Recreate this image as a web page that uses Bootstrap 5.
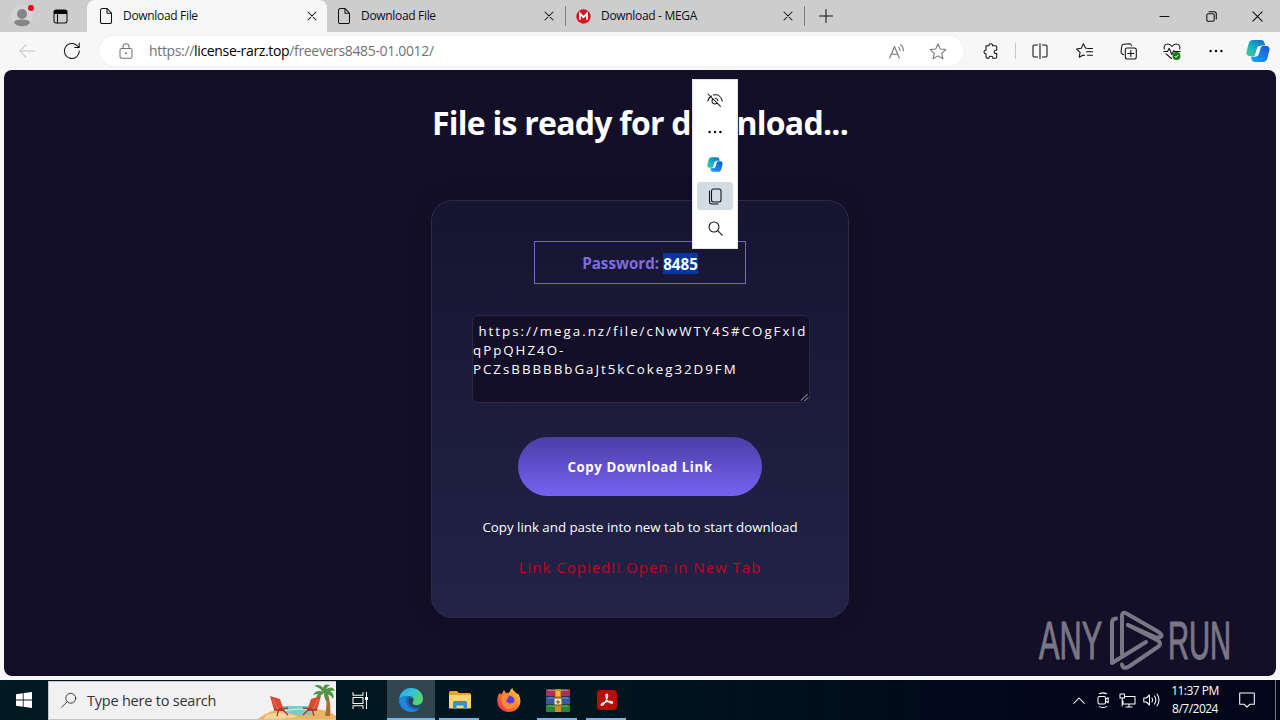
<!DOCTYPE html>
<html lang="en">
<head>
  <meta charset="UTF-8" />
  <meta name="viewport" content="width=device-width, initial-scale=1" />
  <title>Download File</title>
  <link href="https://cdn.jsdelivr.net/npm/bootstrap@5.3.0/dist/css/bootstrap.min.css" rel="stylesheet" />

  <style>
    body {
      width: 1280px;
      height: 720px;
      background-color: #f7f7f7;
      font-family: "Open Sans", "Noto Sans", sans-serif;
      font-size: 12px;
      line-height: 1;
      color: #111;
    }

    svg {
      display: block;
      flex-shrink: 0;
      overflow: visible;
    }

    .ln {
      fill: none;
      stroke: currentColor;
      stroke-width: 1.05;
      stroke-linecap: round;
      stroke-linejoin: round;
    }

    /* tab strip */
    .tabstrip { height: 32px; background: #cdcdcd; }
    .strip-start { width: 87px; border-bottom-right-radius: 8px; padding-left: 10px; gap: 18px; }
    .tab-item { width: 238px; padding: 0 11px 0 10px; }
    .tab-item.current { width: 240px; background: #f7f7f7; border-radius: 8px 8px 0 0; padding-left: 12px; padding-right: 10px; }
    .tab-item .name { margin-left: 10px; letter-spacing: -.32px; }
    .tab-line { width: 1px; height: 20px; background: #808080; }
    .plus { margin-left: 14px; }
    .win-btn { width: 46px; }

    /* address row */
    .toolbar { height: 38px; }
    .reload { width: 55px; padding-left: 19px; }
    .addr { width: 865px; height: 30px; background: #fff; border-radius: 15px; box-shadow: 0 0 2px #e2e2e2; color: #737373; }
    .addr .url { font-size: 14px; letter-spacing: -.34px; margin-left: 16px; }
    .addr .url b { font-weight: 400; color: #000; }
    .addr .star { margin-right: 17px; }
    .slot { width: 44px; height: 30px; }
    .puzzle { width: 51px; }
    .slim { height: 16px; opacity: .4; margin-right: 2px; }

    /* page */
    .page { height: 606px; margin: 0 4px; border-radius: 8px; background: #130f28; color: #fff; }
    .page h1 { font-size: 32px; font-weight: 700; line-height: 44px; margin: 31px 0 55px; letter-spacing: -.75px; white-space: nowrap; }
    .panel {
      width: 418px;
      height: 418px;
      border: 1px solid #2d2a46;
      border-radius: 21px;
      background: linear-gradient(#161430, #222347);
      box-shadow: 0 0 25px rgba(5, 3, 20, .15);
      padding-top: 40px;
    }
    .pass { width: 212px; height: 43px; border: 1px solid #7762d4; color: #7d6be0; font-size: 15.2px; font-weight: 700; line-height: 22px; padding-top: 1px; }
    .pass .sel { background: #0636a0; color: #fff; height: 21px; }
    .linkbox {
      width: 338px;
      height: 88px;
      margin: 31px 0 34px 2px;
      padding: 6px 0 0;
      border: 1px solid #2a2742;
      border-radius: 6px;
      background: #130f28;
      color: #fff;
      font-size: 13.3px;
      line-height: 19px;
      letter-spacing: 2px;
      white-space: pre;
      overflow: hidden;
    }
    .copy-btn { width: 244px; height: 59px; border-radius: 30px; background: linear-gradient(#4c3da6, #7762f1); color: #fff; font-size: 13.3px; font-weight: 700; letter-spacing: .55px; border: 0; padding: 2px 0 0; }
    .hint { font-size: 13.3px; line-height: 20px; margin: 21px 0 20px; white-space: nowrap; }
    .copied { font-size: 15px; line-height: 20px; color: #c00420; letter-spacing: 1px; white-space: nowrap; }
    .mini-menu { left: 692px; top: 79px; width: 46px; height: 170px; background: #fff; border: 1px solid #e4e4e8; padding: 6px 0; gap: 4px; }
    .mini-menu div { width: 36px; height: 28px; border-radius: 3px; }
    .mini-menu .hot { background: #d2dce5; }
    .watermark { left: 1036px; top: 606px; opacity: .52; }

    /* taskbar */
    .taskbar { height: 40px; margin-top: 4px; background: linear-gradient(90deg, #001923, #00141e 50%, #020619 85%); color: #fff; }
    .searchbox { width: 288px; height: 39px; background: #f1f1f1; border: 1px solid #c4c4c4; border-width: 1px 0 1px 1px; color: #333; }
    .searchbox span { font-size: 14.5px; letter-spacing: -.22px; margin-left: 10px; padding-top: 2px; }
    .app { width: 49px; height: 40px; }
    .app.views { width: 51px; padding-right: 3px; }
    .app.on { background: #31454e; width: 48px; }
    .app i { bottom: 0; left: 4px; right: 5px; height: 2px; background: #76b4ec; }
    .app.on i { left: 0; right: 0; }
    .tray { width: 24px; }
    .clock { width: 56px; line-height: 18px; font-size: 12px; letter-spacing: -.5px; white-space: nowrap; }
  </style>
</head>
<body class="overflow-hidden d-flex flex-column">

  <svg width="0" height="0" class="position-absolute">
    <defs>
      <linearGradient id="cpA" x1="0" y1="1" x2=".8" y2="0"><stop offset="0" stop-color="#3ed08a" /><stop offset=".45" stop-color="#1fb2c4" /><stop offset="1" stop-color="#0f76c9" /></linearGradient>
      <linearGradient id="cpB" x1="0" y1="1" x2="1" y2="0"><stop offset="0" stop-color="#19a7f2" /><stop offset="1" stop-color="#1658d6" /></linearGradient>
      <linearGradient id="edgeA" x1="0" y1="0" x2="1" y2=".6"><stop offset="0" stop-color="#2ba5e0" /><stop offset=".5" stop-color="#35c1d8" /><stop offset="1" stop-color="#58d85f" /></linearGradient>
      <linearGradient id="ffA" x1="1" y1="0" x2="0" y2="1"><stop offset="0" stop-color="#ffe23c" /><stop offset=".5" stop-color="#ff7a22" /><stop offset="1" stop-color="#ec1c66" /></linearGradient>
      <symbol id="doc" viewBox="0 0 14 18"><path class="ln" d="M1.5 3.5a2 2 0 0 1 2-2h4.6l4.4 4.6v8.9a1.5 1.5 0 0 1-1.5 1.5H3a1.5 1.5 0 0 1-1.5-1.5zM8 1.7v4.5h4.3" /></symbol>
      <symbol id="cross" viewBox="0 0 10 10"><path class="ln" d="M1 1l8 8M9 1L1 9" /></symbol>
      <symbol id="dots" viewBox="0 0 14 4"><circle cx="1.6" cy="2" r="1.2" /><circle cx="7" cy="2" r="1.2" /><circle cx="12.4" cy="2" r="1.2" /></symbol>
      <symbol id="pilot" viewBox="0 0 24 22">
        <path fill="url(#cpA)" d="M7 0h8c2 0 3 1 3.500 3l.7 2.500h-3.200c-2 0-3 1-3.500 2.500L10 16H4C1 16 0 14 .7 11l2-7.500C3.300 1.200 4.800 0 7 0z" />
        <path fill="url(#cpB)" d="M17 22H9c-2 0-3-1-3.500-3l-.7-2.500H8c2 0 3-1 3.500-2.500L14 6h6c3 0 4 2 3.300 5l-2 7.500c-.6 2.300-2.100 3.500-4.300 3.500z" />
        <path fill="#fff" d="M15 6h-1.200c-1.400 0-2.300.9-2.700 2.200L9.300 14c-.4 1.400-1 2-2.100 2.400h2.600c1.600 0 2.600-.9 3-2.300l1.700-5.700c.3-1.100.7-1.900 1.700-2.400z" />
      </symbol>
    </defs>
  </svg>

  <!-- tab strip -->
  <header class="tabstrip d-flex align-items-center">
    <div class="strip-start h-100 d-flex align-items-center">
      <svg width="25" height="24" viewBox="0 0 25 24"><circle cx="12" cy="12" r="11" fill="#d4d4d4" /><circle cx="12" cy="10" r="5" fill="#858585" /><path d="M4 19c0-3 4-3.600 8-3.600s8 .6 8 3.600c-1.500 2-4.500 3.300-8 3.300S5.500 21 4 19z" fill="#858585" /><circle cx="21" cy="4" r="3" fill="#e00b1c" /></svg>
      <svg width="15" height="15" viewBox="0 0 15 15"><rect class="ln" x="1" y="1" width="13" height="13" rx="2" /><path d="M1 2q0-1 1-1h11q1 0 1 1v3H1z" /><path class="ln" d="M4.500 4v10" /></svg>
    </div>
    <div class="tab-item current h-100 d-flex align-items-center">
      <svg width="14" height="18"><use href="#doc" /></svg><span class="name me-auto">Download File</span><svg width="10" height="10"><use href="#cross" /></svg>
    </div>
    <div class="tab-item d-flex align-items-center">
      <svg width="14" height="18"><use href="#doc" /></svg><span class="name me-auto">Download File</span><svg width="10" height="10"><use href="#cross" /></svg>
    </div>
    <div class="tab-line"></div>
    <div class="tab-item d-flex align-items-center">
      <svg width="15" height="15" viewBox="0 0 15 15"><circle cx="7.500" cy="7.500" r="7.200" fill="#d9101f" /><path d="M4 10.800V4.500l3.500 3.600L11 4.500v6.300" fill="none" stroke="#fff" stroke-width="1.800" /></svg><span class="name me-auto">Download - MEGA</span><svg width="10" height="10"><use href="#cross" /></svg>
    </div>
    <div class="tab-line"></div>
    <svg width="14" height="14" viewBox="0 0 14 14" class="plus me-auto"><path class="ln" d="M7 .5v13M.5 7h13" /></svg>
    <div class="win-btn d-flex justify-content-center"><svg width="10" height="10" viewBox="0 0 10 10"><path class="ln" d="M0 5.500h9" /></svg></div>
    <div class="win-btn d-flex justify-content-center"><svg width="11" height="11" viewBox="0 0 11 11"><rect class="ln" x=".8" y="2.800" width="7.400" height="7.400" rx="1.500" /><path class="ln" d="M3 .7h5a2.300 2.300 0 0 1 2.300 2.300v5" /></svg></div>
    <div class="win-btn d-flex justify-content-center"><svg width="11" height="11" viewBox="0 0 10 10"><path class="ln" d="M.8.8l8.400 8.400M9.200.8L.8 9.200" /></svg></div>
  </header>

  <!-- address row -->
  <div class="toolbar d-flex align-items-center">
    <div class="slot d-flex align-items-center justify-content-end pe-2"><svg width="17" height="14" viewBox="0 0 17 14" style="color:#c4c4c4"><path class="ln" d="M7 .8L.8 7 7 13.200M1 7h15" /></svg></div>
    <div class="reload d-flex align-items-center"><svg width="18" height="18" viewBox="0 0 18 18"><path class="ln" d="M16.300 9A7.500 7.500 0 1 1 13 2.800L16 5.200M16.200 1v4.500h-4.500" /></svg></div>
    <div class="addr d-flex align-items-center ps-3">
      <svg class="ms-1" width="14" height="16" viewBox="0 0 14 16"><rect class="ln" x="1" y="5.500" width="12" height="9.700" rx="1.800" /><path class="ln" d="M4 5.500V3.700a3 3 0 0 1 6 0v1.800" /><circle cx="7" cy="10.300" r="1" fill="currentColor" /></svg>
      <span class="url me-auto">https://<b>license-rarz.top</b>/freevers8485-01.0012/</span>
      <svg class="me-4" width="16" height="15" viewBox="0 0 16 15"><path class="ln" d="M.7 14L5.500 2.500 10.300 14M2.300 10.200h6.400M9.500 3.200q1.500 1.300 1.500 3.300M11.500.8q3 2 2.800 6" /></svg>
      <svg class="star" width="18" height="17" viewBox="0 0 18 17"><path class="ln" d="M9 1l2.300 5 5.500.6-4.100 3.700 1.200 5.400L9 12.900l-4.900 2.800 1.200-5.400L1.200 6.600 6.700 6z" /></svg>
    </div>
    <div class="puzzle d-flex align-items-center justify-content-end pe-3"><svg width="16" height="17" viewBox="0 0 16 17"><path class="ln" d="M3 2.800h3C5.600 1.500 6.500.8 7.800.8s2.200.8 1.800 2h2.700q1.500 0 1.500 1.500v2.800c-3.200-.7-3.600 4-.1 3.300v3.300q0 1.500-1.500 1.500H9.700c.4-1.300-.6-2-1.900-2s-2.200.8-1.800 2H4.400Q3 15.200 3 13.700v-2.900C.4 10.800.3 7 3 7.200z" /></svg></div>
    <div class="tab-line slim"></div>
    <div class="slot d-flex align-items-center justify-content-center"><svg width="16" height="16" viewBox="0 0 16 16"><path class="ln" d="M5.500 2H2.300Q1 2 1 3.300v9.400Q1 14 2.300 14h3.200M10.500 2h3.200Q15 2 15 3.300v9.400q0 1.300-1.300 1.300h-3.200M8 .5v15" /></svg></div>
    <div class="slot d-flex align-items-center justify-content-center"><svg width="17" height="16" viewBox="0 0 17 16"><path class="ln" d="M10.500 5.200L9.500 5 7.400.8 5.300 5.200.6 6l3.500 3.300-.9 5 4.200-2.300 1 .5M11.500 5.500h5M10.500 8.800h6M11.500 12.200h5" /></svg></div>
    <div class="slot d-flex align-items-center justify-content-center"><svg width="17" height="17" viewBox="0 0 17 17"><path class="ln" d="M3.500 11.800L2.300 11Q1 10.500 1 8.700L1.800 3Q2 1.500 3.500 1.300L9.500.8q1.600 0 2 1.800" /><rect class="ln" x="5.300" y="5" width="11" height="11" rx="2" /><path class="ln" d="M10.800 7.500v6M7.800 10.500h6" /></svg></div>
    <div class="slot d-flex align-items-center justify-content-center"><svg width="18" height="17" viewBox="0 0 18 17"><path class="ln" d="M1.300 6C.4 3.500 2.200 1 4.700 1 6.500 1 8 2 9 3.500 10 2 11.500 1 13.300 1c2.500 0 4.300 2.500 3.400 5M.8 8.500h3.700l1.700-3.200 2.600 6.200 2-4 .8 1h5.600M3 10.800l5.500 4.700" /><circle cx="13.500" cy="13" r="4" fill="#107c10" /><path d="M11.500 13l1.400 1.400 2.600-2.700" fill="none" stroke="#fff" /></svg></div>
    <div class="slot d-flex align-items-center justify-content-center"><svg width="14" height="4"><use href="#dots" /></svg></div>
    <svg class="ms-2" width="24" height="22"><use href="#pilot" /></svg>
  </div>

  <!-- page content -->
  <main class="page d-flex flex-column align-items-center">
    <h1>File is ready for download...</h1>
    <section class="panel d-flex flex-column align-items-center">
      <div class="pass d-flex align-items-center justify-content-center"><span>Password:&nbsp;</span><span class="sel">8485</span></div>
      <div class="linkbox position-relative"> https://mega.nz/file/cNwWTY4S#COgFxId
qPpQHZ4O-
PCZsBBBBBbGaJt5kCokeg32D9FM<svg class="position-absolute bottom-0 end-0" width="9" height="9" viewBox="0 0 9 9"><path d="M1 7.500L7.500 1M4.500 8L8 4.500" stroke="#bbb" /></svg></div>
      <button class="copy-btn" type="button">Copy Download Link</button>
      <p class="hint">Copy link and paste into new tab to start download</p>
      <p class="copied mb-0">Link Copied!! Open in New Tab</p>
    </section>
  </main>

  <!-- selection mini menu -->
  <div class="mini-menu position-absolute d-flex flex-column align-items-center">
    <div class="d-flex align-items-center justify-content-center"><svg width="16" height="14" viewBox="0 0 16 14"><path class="ln" d="M1 1l12.500 12.300M.8 8C1.400 5.700 2.700 4 4.400 3M6.300 1.900C10.500 1 14.200 3.300 15.300 8M6 6A2.800 2.800 0 1 0 9.900 10M8.300 5.200a2.800 2.800 0 0 1 2.500 2.500" /></svg></div>
    <div class="d-flex align-items-center justify-content-center"><svg width="14" height="4"><use href="#dots" /></svg></div>
    <div class="d-flex align-items-center justify-content-center"><svg width="16" height="15"><use href="#pilot" /></svg></div>
    <div class="hot d-flex align-items-center justify-content-center"><svg width="14" height="17" viewBox="0 0 14 17"><rect class="ln" x="3.500" y="1" width="9.500" height="13" rx="2" /><path class="ln" d="M1.500 3v10.500Q1.500 16 4 16h6" /></svg></div>
    <div class="d-flex align-items-center justify-content-center"><svg width="15" height="15" viewBox="0 0 15 15"><circle cx="6" cy="6" r="5" class="ln" /><path class="ln" d="M9.700 9.700L14.200 14.200" /></svg></div>
  </div>

  <!-- watermark -->
  <svg class="watermark position-absolute" width="230" height="68" viewBox="0 0 230 68">
    <g fill="#d8d5dc" stroke="#d8d5dc" stroke-width="1" font-family="Liberation Sans, sans-serif" font-size="53">
      <text transform="translate(3 53) scale(.58 1)">ANY</text>
      <text transform="translate(132 53) scale(.55 1)">RUN</text>
    </g>
    <g fill="none" stroke="#d8d5dc" stroke-width="4" stroke-linejoin="round" stroke-linecap="round">
      <path d="M80 12.500q-4 0-4 4.500v40L110 36" />
      <path d="M86 48V10q0-5 4.500-2.500L121 25q6 3.500 4 5.500t-7 0L92 19" />
      <path d="M92 19L121 34q6 3.500 0 7.500L93 60.500q-6 3.500-7-2" />
    </g>
  </svg>

  <!-- taskbar -->
  <footer class="taskbar d-flex align-items-center">
    <div class="d-flex justify-content-center" style="width:48px"><svg width="16" height="16" viewBox="0 0 16 16" fill="#fff"><path d="M0 2.200L6.800 1.200V7.600H0zM7.600 1.100L16 0v7.600H7.600zM0 8.400h6.800v6.400L0 13.800zM7.600 8.400H16V16l-8.400-1.200z" /></svg></div>
    <div class="searchbox d-flex align-items-center">
      <svg class="ms-2 ps-1" width="20" height="18" viewBox="0 0 18 18"><circle cx="11" cy="7" r="5.600" class="ln" /><path class="ln" d="M7 11L.8 17" /></svg>
      <span class="me-auto">Type here to search</span>
      <svg width="78" height="37" viewBox="0 0 78 37">
        <path d="M0 37q12-10 29-10h26q14 0 23 7v3z" fill="#e9b565" />
        <path d="M8 33q16-6 32 2l-18 2H6z" fill="#f7d596" />
        <path d="M24 24h34v5q-7 5-18 4-12-1-16-5z" fill="#77cfc8" />
        <path d="M27 29q14-4 28 0" stroke="#d5f2e4" fill="none" />
        <path d="M67 34q3-14 0-24h2.500q4 13 2.500 24z" fill="#a96d30" />
        <path d="M66 10q-8-3-11 3 3-1 5-1-3 3-1 8 2-6 7-9 0 6 3 9 2-4 0-8 4 1 6 5 2-5-3-8 4-1 5 0-2-6-9-2 2-3 4-4-6-2-7 3-3-5-9-2 5 1 9 6z" fill="#4f9548" />
        <path d="M12 14l10 3 4 12-10-1zM63 14l-10 3-4 12 10-1z" fill="#dc4a32" />
        <path d="M15 17l5 11M60 17l-5 11" stroke="#f2765c" />
        <path d="M16 28h9l5 5M30 26l-9 1-2 7M59 28h-9l-5 5M45 26l9 1 2 7" stroke="#a8382a" stroke-width="1.300" fill="none" />
      </svg>
    </div>
    <div class="app views d-flex align-items-center justify-content-center"><svg width="17" height="17" viewBox="0 0 17 17"><path class="ln" d="M1 .5v2.700h10V.5M1 16.500v-2.700h10v2.700M1 5.500h10v6H1zM14.500.5v16" /><path d="M13 5h3v3h-3z" fill="#fff" /></svg></div>
    <div class="app on position-relative d-flex align-items-center justify-content-center"><svg width="24" height="24" viewBox="0 0 24 24"><circle cx="12" cy="12" r="12" fill="#1467b8" /><path d="M.2 11C1 4.500 6 0 12 0c7 0 12 5 12 10.500 0 4-3 6.500-6.500 6.500-3 0-4.500-1.300-3.500-3 1.500-2.500.5-6-4-6-4 0-8 1.300-9.800 3z" fill="url(#edgeA)" /><path d="M9 8.200C6 10 5.500 18 14 21.500c2 .6 4 .5 6.500-1C15 27 2 24 .2 14 0 9 5 7 9 8.200z" fill="#2187d8" /><path d="M13.500 14.500c-1 2.500 4.500 4.500 8.500 1.700.8-.5 1.300.3.8 1-3.500 5-12.600 2.300-13.300-3.200C9 10.500 11.500 9 13 10c1.800 1.300 1.300 3 .5 4.500z" fill="#31454e" /></svg><i class="position-absolute"></i></div>
    <div class="app position-relative d-flex align-items-center justify-content-center"><svg width="22" height="20" viewBox="0 0 22 20"><path d="M0 2.500Q0 1 1.500 1H8l2 2h10.500Q22 3 22 4.500V8H0z" fill="#e7a22c" /><path d="M0 5h22v12.500q0 1-1 1H1q-1 0-1-1z" fill="#fcd56e" /><path d="M4 19v-6.500q0-1.500 1.500-1.500h11q1.500 0 1.500 1.500V19h-3.500v-3.500h-7V19z" fill="#3293d1" /></svg><i class="position-absolute"></i></div>
    <div class="app d-flex align-items-center justify-content-center"><svg width="24" height="24" viewBox="0 0 24 24"><path d="M2.500 5l2 1.500Q6 3 7 2l2 3.300Q12 5 13 3.500 13 1 15.500 0c0 3 3 3.500 4.500 6l1-.5c6 9 0 18.500-9 18.500C1 24-2.500 13 2.500 5z" fill="url(#ffA)" /><circle cx="12" cy="13" r="5.600" fill="#7442dd" /><path d="M5 8q3-2 7 .5 2 1.500-1 2.500-4 1 0 4 5 2 8-3 1 8-7 9Q3 20 5 8z" fill="#ff922e" opacity=".9" /><circle cx="13.500" cy="11.500" r="3" fill="#5c3bd0" /></svg></div>
    <div class="app position-relative d-flex align-items-center justify-content-center"><svg width="24" height="23" viewBox="0 0 24 23"><rect width="24" height="7" y="0" rx="1" fill="#a93357" /><rect width="24" height="7.500" y="7.500" fill="#355aad" /><rect width="24" height="7.500" y="15.500" rx="1" fill="#2c813b" /><path d="M2 1.500h20M2 9h20M2 17h20" stroke="#d8c4b0" stroke-width=".7" opacity=".7" /><rect x="9" width="6" height="23" fill="#dd8423" /><rect x="8" y="9" width="8" height="7" rx="1" fill="#f5e6c4" stroke="#6b4c25" /><path d="M10 13h4M12 11v4" stroke="#6b4c25" /><rect x="10" y="2" width="4" height="5" fill="#f4bc45" /></svg><i class="position-absolute"></i></div>
    <div class="app position-relative d-flex align-items-center justify-content-center"><svg width="20" height="20" viewBox="0 0 20 20"><rect width="20" height="20" rx="3.500" fill="#b90d09" /><path d="M9.800 4.200c1.500 0 .8 3.500-.9 6.500-1.500 2.700-3.400 5-4.400 4.600-1.300-.8 1.300-2.700 4.500-3.500 3.300-.8 6.700-.7 6.600.8-.2 1.500-3.500.1-5.200-2.300C8.800 8 8.400 4.200 9.800 4.200z" fill="none" stroke="#fff" stroke-width="1.200" /></svg><i class="position-absolute"></i></div>
    <div class="tray ms-auto d-flex justify-content-center"><svg width="12" height="7" viewBox="0 0 12 7"><path class="ln" d="M.7 6.300L6 1l5.300 5.300" /></svg></div>
    <div class="tray d-flex justify-content-center"><svg width="12" height="16" viewBox="0 0 12 16"><rect class="ln" x="1" y="4.500" width="7.500" height="7.500" rx="1.500" /><path class="ln" d="M8.700 7.200l2.500-1.500v5L8.700 9.300M2.500 1.800Q6 0 9.500 1.800M2.500 14.600Q6 16.400 9.500 14.600" /></svg></div>
    <div class="tray d-flex justify-content-center"><svg width="17" height="15" viewBox="0 0 17 15"><path class="ln" d="M6 3.500h10v7.500H4V8M10 11v3M7 14h6M1 1h4.500v4H1zM3.200 5v8" /></svg></div>
    <div class="tray d-flex justify-content-center"><svg width="17" height="14" viewBox="0 0 17 14"><path class="ln" d="M.8 5h2.500L6.500 2v10L3.300 9H.8zM9 5q1.300 2 0 4M11.500 3q2.700 4 0 8M14 1q4 6 0 12" /></svg></div>
    <div class="clock text-center ms-1">11:37 PM<br />8/7/2024</div>
    <div class="d-flex justify-content-center me-1" style="width:48px"><svg width="16" height="16" viewBox="0 0 16 16"><path class="ln" d="M.7 1h14.600v11.300h-4.500L8 15l-2.800-2.700H.7z" /></svg></div>
    <div class="border-start border-secondary h-100" style="width:5px"></div>
  </footer>

  <script src="https://cdn.jsdelivr.net/npm/bootstrap@5.3.0/dist/js/bootstrap.bundle.min.js"></script>
</body>
</html>
